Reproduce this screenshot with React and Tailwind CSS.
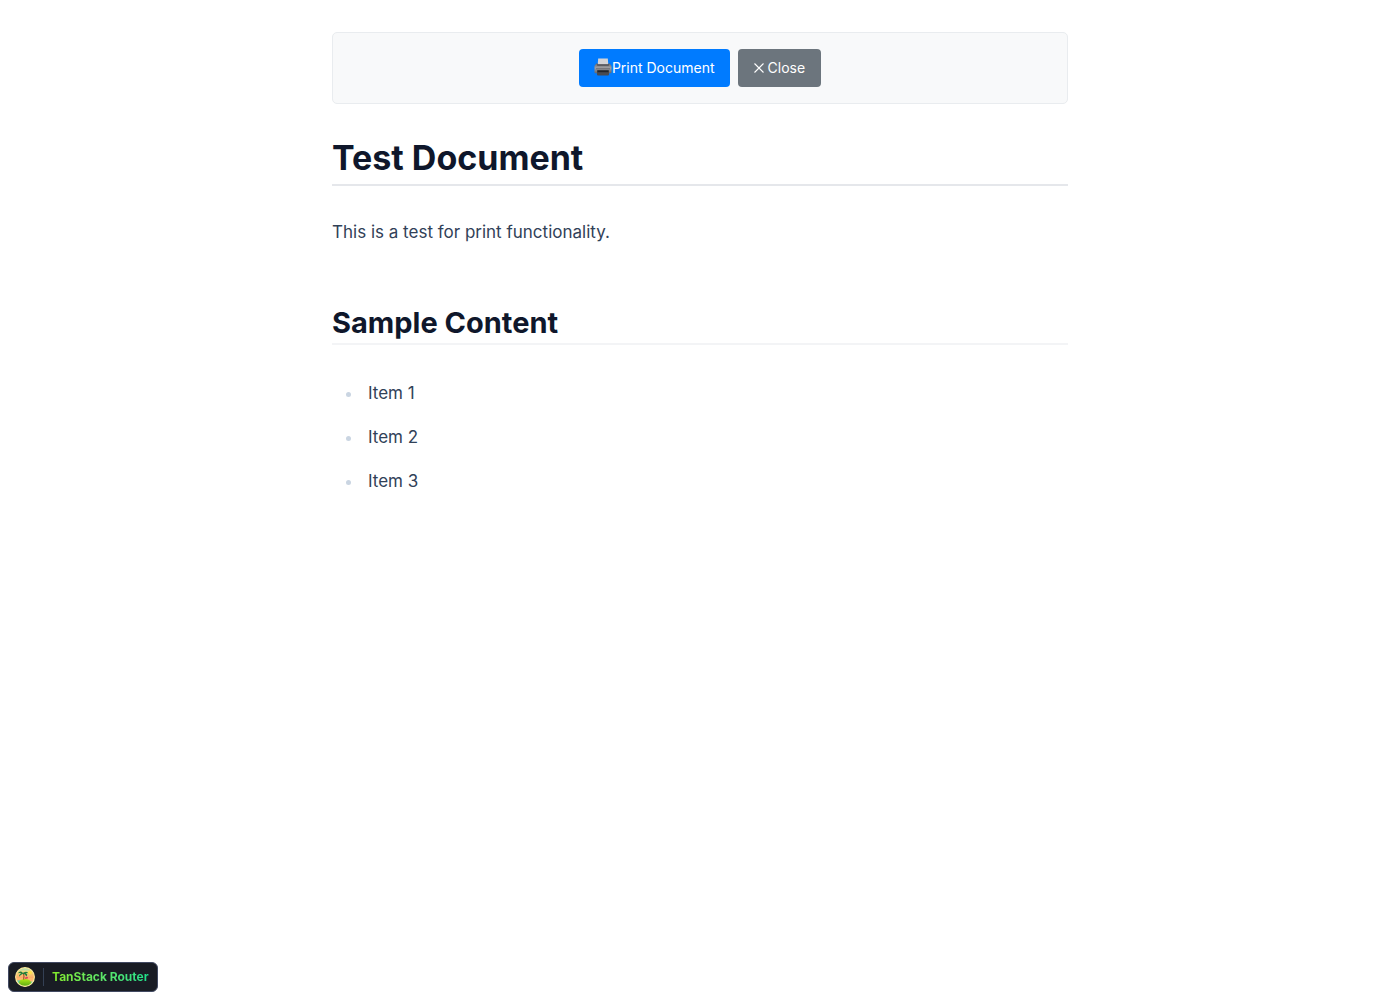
function PrinterIcon() {
  return (
    <svg width="18" height="20" viewBox="0 0 18 20" aria-hidden="true" className="shrink-0">
      <defs>
        <linearGradient id="printer-body" x1="0" y1="0" x2="0" y2="1">
          <stop offset="0" stopColor="#66676c" />
          <stop offset="0.45" stopColor="#a0a0a4" />
          <stop offset="1" stopColor="#66676c" />
        </linearGradient>
      </defs>
      <path d="M4.2 0.5h9.6l0.6 7H3.6z" fill="#d3d3d6" />
      <path d="M2.2 5.5h1.6v1.5h10.4V5.5h1.6L17.5 8v6.2a1 1 0 0 1-1 1h-15a1 1 0 0 1-1-1V8z" fill="url(#printer-body)" />
      <path d="M3.2 6.2h11.6v1.5H3.2z" fill="#4b4c52" />
      <path d="M2 10.2h14v1.1H2z" fill="#6f7075" />
      <path d="M3 12.2h12v4.2a1 1 0 0 1-1 1H4a1 1 0 0 1-1-1z" fill="#494b51" />
      <path d="M3.5 12.4h11v1.8h-11z" fill="#22252b" />
    </svg>
  );
}

function CrossIcon() {
  return (
    <svg width="10" height="10" viewBox="0 0 10 10" aria-hidden="true" className="shrink-0">
      <path d="M0.5 0.5l9 9M9.5 0.5l-9 9" stroke="currentColor" strokeWidth="1.1" fill="none" />
    </svg>
  );
}

function IslandLogo() {
  return (
    <svg width="20" height="20" viewBox="0 0 20 20" aria-hidden="true" className="shrink-0">
      <defs>
        <linearGradient id="sky" x1="0" y1="0" x2="0" y2="1">
          <stop offset="0" stopColor="#8be0d0" />
          <stop offset="0.25" stopColor="#f5d77a" />
          <stop offset="0.65" stopColor="#ff9a62" />
        </linearGradient>
        <linearGradient id="hill" x1="0" y1="0" x2="0" y2="1">
          <stop offset="0" stopColor="#b2e916" />
          <stop offset="1" stopColor="#57a813" />
        </linearGradient>
        <clipPath id="disc"><circle cx="10" cy="10" r="9.3" /></clipPath>
      </defs>
      <g clipPath="url(#disc)">
        <rect width="20" height="20" fill="url(#sky)" />
        <circle cx="15" cy="5.5" r="2" fill="#ffe04e" />
        <path d="M0 11h20v9H0z" fill="#ffb76d" />
        <path d="M0 14q5-1.5 10 0t10 0v6H0z" fill="#5fcbb0" />
        <ellipse cx="10" cy="15.6" rx="6" ry="3.6" fill="url(#hill)" />
        <path d="M8 5.8Q9.7 9 8.6 12.6" stroke="#a5502b" strokeWidth="1.1" fill="none" />
        <path d="M8 6Q5.2 3 2.8 6.3Q5 5.5 6.3 6.4Q3.7 7 4.2 9.7Q5.5 7.6 8 6.8Q10.8 7.4 11.3 9.5Q13.5 7 10.7 6.4Q12.7 5.6 13.4 6.4Q12 3.3 8 6z" fill="#23803d" />
        <path d="M9.8 10.8l2.6-1 0.8 1.5-2.8.6z" fill="#d93d55" />
      </g>
      <circle cx="10" cy="10" r="9.4" fill="none" stroke="#ffee9c" strokeWidth="1.1" />
    </svg>
  );
}

const items = ["Item 1", "Item 2", "Item 3"];

export default function App() {
  return (
    <div className="min-h-screen bg-white font-['Inter',sans-serif] text-slate-700">
      <main className="mx-auto max-w-[800px] p-8">
        <div className="flex justify-center gap-2 rounded-[5px] border border-[#e9ecef] bg-[#f8f9fa] p-4">
          <button type="button" className="flex h-[38px] items-center rounded bg-[#007bff] px-[15px] text-sm text-white">
            <PrinterIcon />
            Print Document
          </button>
          <button type="button" className="flex h-[38px] items-center gap-1 rounded bg-[#6c757d] px-4 text-sm text-white">
            <CrossIcon />
            Close
          </button>
        </div>
        <h1 className="mt-[34px] border-b-2 border-gray-200 pb-1.5 text-[34px] leading-10 font-bold text-slate-900">
          Test Document
        </h1>
        <p className="mt-8 text-[17px] leading-7">This is a test for print functionality.</p>
        <h2 className="mt-[59px] border-b-2 border-gray-100 pb-0.5 text-[29px] leading-9 font-bold text-slate-900">
          Sample Content
        </h2>
        <ul className="mt-[34px] flex list-disc flex-col gap-4 pl-[31px] text-[17px] leading-7 marker:text-slate-300">
          {items.map((item) => (
            <li key={item} className="pl-[5px]">{item}</li>
          ))}
        </ul>
      </main>
      <button
        type="button"
        className="fixed bottom-2 left-2 flex h-[30px] items-center gap-2 rounded-md border border-[#414962] bg-[#191c24] pr-2 pl-1.5 text-xs font-bold"
      >
        <IslandLogo />
        <span className="h-[18px] w-px bg-[#344054]" />
        <span className="bg-linear-to-r from-[#84ec26] to-[#18e08a] bg-clip-text text-transparent">TanStack Router</span>
      </button>
    </div>
  );
}
